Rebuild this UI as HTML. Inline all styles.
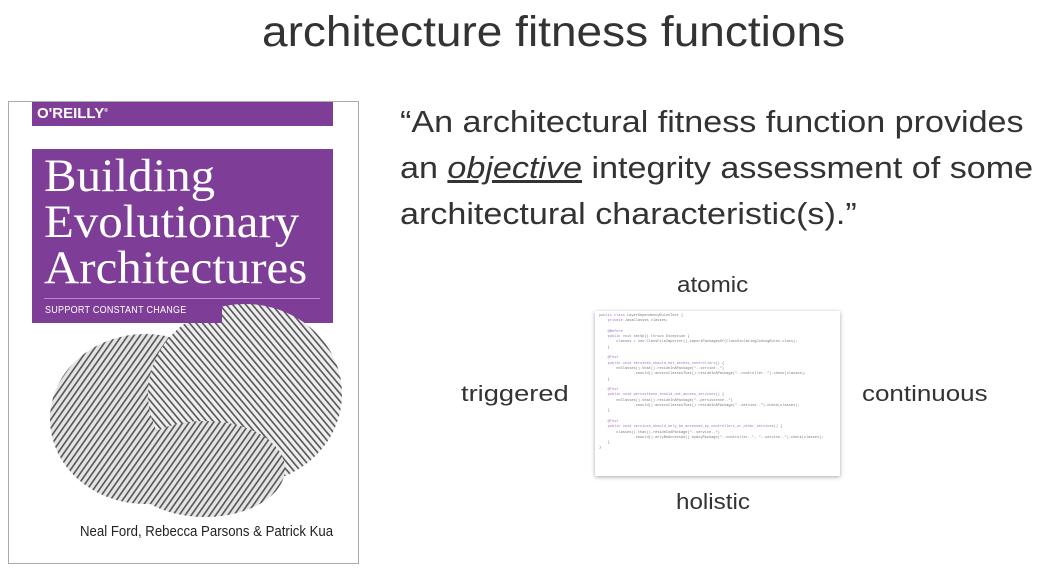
<!DOCTYPE html>
<html><head><meta charset="utf-8"><style>
body{margin:0;width:1040px;height:570px;background:#fff;position:relative;overflow:hidden;font-family:"Liberation Sans",sans-serif;color:#333}
.t{position:absolute;white-space:nowrap;transform-origin:0 0}
.code{position:absolute;left:595px;top:311px;width:245px;height:165px;background:#fff;box-shadow:0 1px 4px rgba(0,0,0,.35);font-family:"Liberation Mono",monospace;font-size:3.6px;line-height:5.3px;color:#777;padding:3px 4px;box-sizing:border-box;white-space:pre}
.code b{color:#a070c0;font-weight:normal}
</style></head><body>
<div class="t" style="left:262px;top:8px;font-size:43px;transform:scaleX(1.07)">architecture fitness functions</div>

<div style="position:absolute;left:8px;top:101px;width:349px;height:461px;border:1px solid #aaa;background:#fff"></div>
<div style="position:absolute;left:32px;top:102px;width:301px;height:24px;background:#7e3e98"></div>
<div class="t" style="left:37px;top:105px;font-size:15px;font-weight:bold;color:#fff">O'REILLY<sup style="font-size:5px">®</sup></div>
<div style="position:absolute;left:32px;top:149px;width:301px;height:174px;background:#7e3e98"></div>
<svg style="position:absolute;left:40px;top:294px" width="310" height="230" viewBox="0 0 310 230">
<defs><pattern id="p" width="5" height="5" patternUnits="userSpaceOnUse" patternTransform="rotate(35)"><rect width="5" height="5" fill="#e4e4e4"/><rect width="1.6" height="5" fill="#555"/></pattern>
<pattern id="q" width="5" height="5" patternUnits="userSpaceOnUse" patternTransform="rotate(-40)"><rect width="5" height="5" fill="#eee"/><rect width="1.6" height="5" fill="#555"/></pattern></defs>
<ellipse cx="105" cy="125" rx="95" ry="85" fill="url(#p)"/>
<ellipse cx="205" cy="100" rx="97" ry="90" fill="url(#q)"/>
<ellipse cx="165" cy="175" rx="80" ry="48" fill="url(#p)"/>
</svg>
<div style="position:absolute;left:32px;top:149px;width:301px;height:150px;background:#7e3e98"></div>
<div class="t" style="left:44px;top:153px;font-family:'Liberation Serif',serif;font-size:47px;line-height:46px;color:#fff;transform:scaleX(1.04)">Building<br>Evolutionary<br>Architectures</div>
<div style="position:absolute;left:44px;top:298px;width:276px;height:1px;background:#b58cc8"></div>
<div style="position:absolute;left:32px;top:299px;width:190px;height:24px;background:#7e3e98"></div>
<div class="t" style="left:45px;top:305px;font-size:10px;color:#fff;letter-spacing:.3px;transform:scaleX(.9)">SUPPORT CONSTANT CHANGE</div>
<div class="t" style="left:80px;top:523px;font-size:15px;color:#222;transform:scaleX(.88)">Neal Ford, Rebecca Parsons &amp; Patrick Kua</div>

<div class="t" style="left:400px;top:99px;font-size:31px;line-height:46px;transform:scaleX(1.1)">“An architectural fitness function provides<br>an <i style="text-decoration:underline">objective</i> integrity assessment of some<br>architectural characteristic(s).”</div>

<div class="t" style="left:677px;top:272px;font-size:22px;transform:scaleX(1.1)">atomic</div>
<div class="t" style="left:461px;top:381px;font-size:22px;transform:scaleX(1.24)">triggered</div>
<div class="t" style="left:862px;top:381px;font-size:22px;transform:scaleX(1.18)">continuous</div>
<div class="t" style="left:676px;top:489px;font-size:22px;transform:scaleX(1.1)">holistic</div>

<div class="code"><b>public class</b> LayerDependencyRulesTest {
    <b>private</b> JavaClasses classes;

    <b>@Before</b>
    <b>public void</b> setUp() <b>throws</b> Exception {
        classes = <b>new</b> ClassFileImporter().importPackagesOf(ClassViolatingCodingRules.class);
    }

    <b>@Test</b>
    <b>public void services_should_not_access_controllers</b>() {
        noClasses().that().resideInAPackage("..service..")
                .should().accessClassesThat().resideInAPackage("..controller..").check(classes);
    }

    <b>@Test</b>
    <b>public void persistence_should_not_access_services</b>() {
        noClasses().that().resideInAPackage("..persistence..")
                .should().accessClassesThat().resideInAPackage("..service..").check(classes);
    }

    <b>@Test</b>
    <b>public void services_should_only_be_accessed_by_controllers_or_other_services</b>() {
        classes().that().resideInAPackage("..service..")
                .should().onlyBeAccessed().byAnyPackage("..controller..", "..service..").check(classes);
    }
}</div>
</body></html>
